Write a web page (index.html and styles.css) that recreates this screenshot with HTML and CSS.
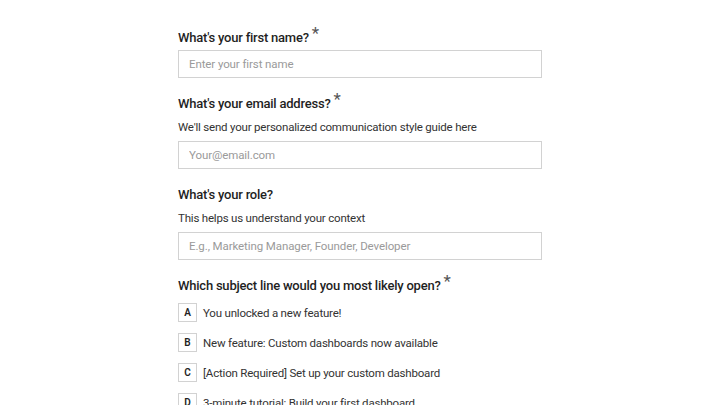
FILE: index.html
```html
<!DOCTYPE html>
<html lang="en">
<head>
    <meta charset="UTF-8">
    <meta name="viewport" content="width=device-width, initial-scale=1.0">
    <title>Communication Style Quiz</title>
    <link rel="stylesheet" href="styles.css">
</head>
<body>
    <form class="quiz-form">
        <!-- Nome -->
        <div class="field">
            <label class="field-label" for="first-name">What's your first name? <span class="required">*</span></label>
            <input class="text-input" id="first-name" type="text" placeholder="Enter your first name">
        </div>

        <!-- Email -->
        <div class="field">
            <label class="field-label" for="email">What's your email address? <span class="required">*</span></label>
            <p class="field-help">We'll send your personalized communication style guide here</p>
            <input class="text-input" id="email" type="email" placeholder="Your@email.com">
        </div>

        <!-- Cargo -->
        <div class="field">
            <label class="field-label" for="role">What's your role?</label>
            <p class="field-help">This helps us understand your context</p>
            <input class="text-input" id="role" type="text" placeholder="E.g., Marketing Manager, Founder, Developer">
        </div>

        <!-- Assunto -->
        <div class="field">
            <span class="field-label">Which subject line would you most likely open? <span class="required">*</span></span>
            <ul class="options">
                <li class="option"><span class="option-key">A</span>You unlocked a new feature!</li>
                <li class="option"><span class="option-key">B</span>New feature: Custom dashboards now available</li>
                <li class="option"><span class="option-key">C</span>[Action Required] Set up your custom dashboard</li>
                <li class="option"><span class="option-key">D</span>3-minute tutorial: Build your first dashboard</li>
            </ul>
        </div>
    </form>
</body>
</html>
```

FILE: styles.css
```css
* {
    margin: 0;
    padding: 0;
    box-sizing: border-box;
}

body {
    font-family: Roboto, Arial, sans-serif;
    background: #fff;
    color: #262626;
    height: 100vh;
    overflow: hidden;
}

.quiz-form {
    width: 364px;
    margin: 0 auto;
    padding-top: 27px;
}

.field {
    margin-bottom: 15px;
}

.field-label {
    display: block;
    font-size: 13px;
    font-weight: 500;
    letter-spacing: -0.22px;
    line-height: 20px;
    color: #1f1f1f;
    padding-top: 1px;
    margin-bottom: 2px;
}

.required {
    font-weight: 400;
    font-size: 17px;
    color: #555;
    vertical-align: 3px;
    line-height: 0;
}

.field-help {
    font-size: 11.5px;
    letter-spacing: -0.2px;
    line-height: 18px;
    color: #333;
    padding: 2px 0 5px;
}

.text-input {
    display: block;
    width: 100%;
    height: 28px;
    border: 1px solid #d2d2d2;
    padding: 0 10px;
    font-family: inherit;
    font-size: 11.5px;
    letter-spacing: -0.1px;
    color: #262626;
    background: #fff;
    outline: none;
}

.text-input::placeholder {
    color: #9a9a9a;
}

.options {
    list-style: none;
    padding-top: 5px;
}

.option {
    display: flex;
    align-items: center;
    gap: 6px;
    height: 19px;
    margin-bottom: 11px;
    font-size: 11.5px;
    letter-spacing: -0.2px;
    color: #333;
}

.option-key {
    width: 19px;
    height: 19px;
    border: 1px solid #d2d2d2;
    display: flex;
    align-items: center;
    justify-content: center;
    font-size: 10px;
    font-weight: 600;
    letter-spacing: 0;
    color: #222;
}
```
